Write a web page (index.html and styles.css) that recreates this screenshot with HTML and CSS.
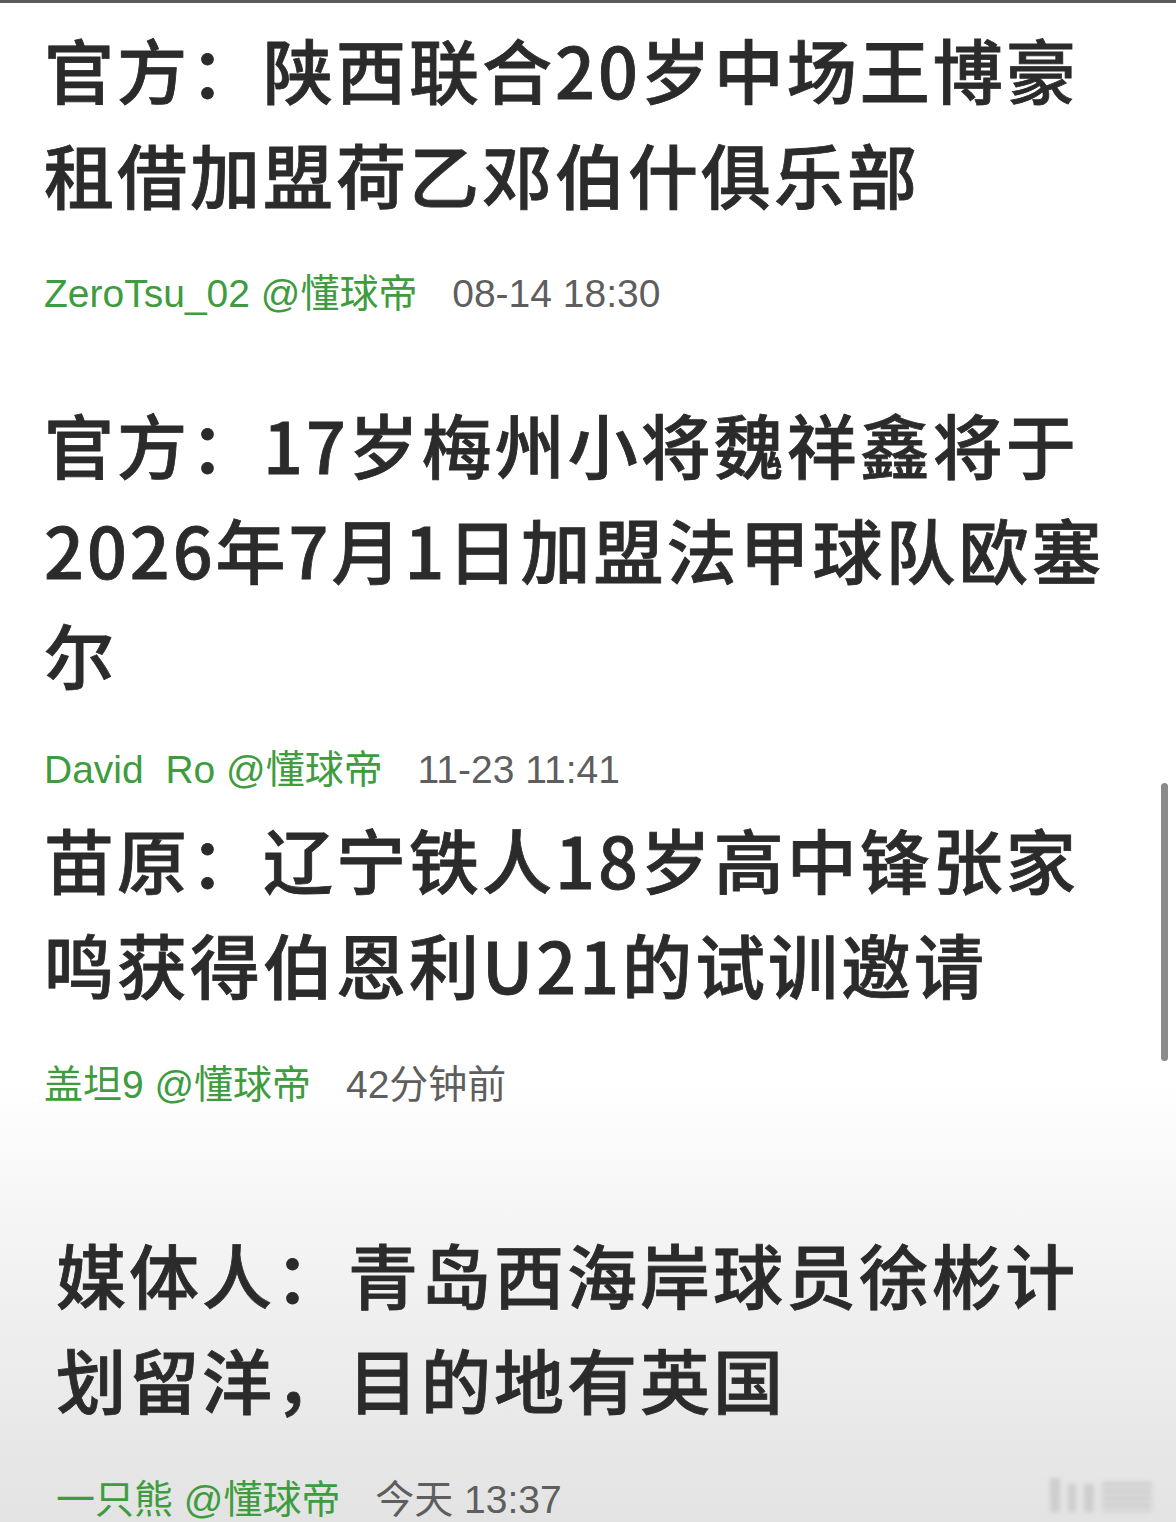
FILE: index.html
```html
<!DOCTYPE html>
<html lang="zh-CN">
  <head>
    <meta charset="UTF-8" />
    <meta name="viewport" content="width=device-width, initial-scale=1.0" />
    <title>懂球帝 新闻</title>
    <link rel="stylesheet" href="styles.css">
  </head>
  <body>
    <div class="top-bar"></div>
    <div class="feed">
      <div class="news news-first">
        <h2 class="title">官方：陕西联合20岁中场王博豪租借加盟荷乙邓伯什俱乐部</h2>
        <div class="meta">
          <span class="author">ZeroTsu_02 @懂球帝</span>
          <span class="time">08-14 18:30</span>
        </div>
      </div>
      <div class="news news-second">
        <h2 class="title">官方：17岁梅州小将魏祥鑫将于2026年7月1日加盟法甲球队欧塞尔</h2>
        <div class="meta">
          <span class="author">David&nbsp; Ro @懂球帝</span>
          <span class="time">11-23 11:41</span>
        </div>
      </div>
      <div class="news news-third">
        <h2 class="title">苗原：辽宁铁人18岁高中锋张家鸣获得伯恩利U21的试训邀请</h2>
        <div class="meta">
          <span class="author">盖坦9 @懂球帝</span>
          <span class="time">42分钟前</span>
        </div>
      </div>
      <div class="news news-last">
        <h2 class="title">媒体人：青岛西海岸球员徐彬计划留洋，目的地有英国</h2>
        <div class="meta">
          <span class="author">一只熊 @懂球帝</span>
          <span class="time">今天 13:37</span>
        </div>
      </div>
    </div>

    <div class="scrollbar"></div>
    <div class="watermark">
      <span class="mark mark-a"></span>
      <span class="mark mark-b"></span>
      <span class="mark mark-c"></span>
      <span class="mark mark-wide"></span>
    </div>
  </body>
</html>
```

FILE: styles.css
```css
body {
  margin: 0;
  font-family: "Noto Sans CJK SC", sans-serif;
  background: linear-gradient(to bottom, #ffffff 0, #ffffff 1080px, #f3f3f3 1250px, #e3e3e3 1522px);
  min-height: 1522px;
  position: relative;
  overflow: hidden;
}
.top-bar {
  height: 3px;
  background-color: #5c5c5c;
}
.news {
  padding-left: 44px;
  padding-right: 60px;
}
.title {
  margin: 0;
  font-size: 70px;
  line-height: 105px;
  letter-spacing: 3px;
  font-weight: 500;
  color: #2b2b2b;
  -webkit-text-stroke: 0.8px #2b2b2b;
}
.meta {
  font-family: "Liberation Sans", "Noto Sans CJK SC", sans-serif;
  font-size: 39px;
  line-height: 44px;
  white-space: nowrap;
}
.author {
  color: #3e9c3e;
  margin-right: 24px;
}
.time {
  color: #5e5e5e;
}
.news-first {
  padding-top: 13px;
}
.news-first .meta {
  margin-top: 46px;
}
.news-second {
  margin-top: 75px;
}
.news-second .meta {
  margin-top: 42px;
}
.news-third {
  margin-top: 14px;
}
.news-third .meta {
  margin-top: 47px;
}
.news-last {
  margin-top: 114px;
  padding-left: 56px;
}
.news-last .meta {
  margin-top: 47px;
}
.scrollbar {
  position: absolute;
  left: 1161px;
  top: 783px;
  width: 7px;
  height: 278px;
  border-radius: 4px;
  background-color: #8a8a8a;
}
.watermark {
  position: absolute;
  left: 1050px;
  top: 1478px;
  display: flex;
  gap: 8px;
  align-items: flex-end;
  filter: blur(2px);
  opacity: 0.7;
}
.mark {
  display: block;
  background-color: #c4c4c4;
}
.mark-a {
  width: 10px;
  height: 34px;
}
.mark-b {
  width: 8px;
  height: 28px;
}
.mark-c {
  width: 10px;
  height: 28px;
}
.mark-wide {
  width: 50px;
  height: 30px;
  background: repeating-linear-gradient(to bottom, #c4c4c4 0, #c4c4c4 4px, #dcdcdc 4px, #dcdcdc 7px);
}
```
